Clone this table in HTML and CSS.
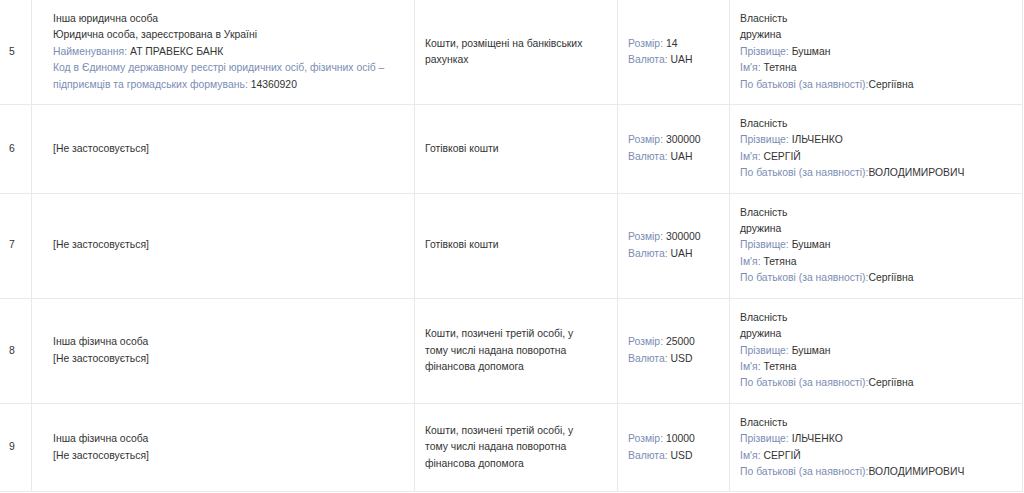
FILE: index.html
```html
<!DOCTYPE html>
<html lang="uk">
<head>
<meta charset="utf-8">
<link rel="stylesheet" href="styles.css">
</head>
<body>
<table class="assets">
  <colgroup>
    <col class="c-num"><col class="c-owner"><col class="c-type"><col class="c-size"><col class="c-rights">
  </colgroup>
  <tbody>
    <tr>
      <td class="num">5</td>
      <td class="owner">
        <div>Інша юридична особа</div>
        <div>Юридична особа, зареєстрована в Україні</div>
        <div><span class="lbl">Найменування:</span> АТ ПРАВЕКС БАНК</div>
        <div><span class="lbl">Код в Єдиному державному реєстрі юридичних осіб, фізичних осіб – підприємців та громадських формувань:</span> 14360920</div>
      </td>
      <td class="type">Кошти, розміщені на банківських рахунках</td>
      <td>
        <div><span class="lbl">Розмір:</span> 14</div>
        <div><span class="lbl">Валюта:</span> UAH</div>
      </td>
      <td>
        <div>Власність</div>
        <div>дружина</div>
        <div><span class="lbl">Прізвище:</span> Бушман</div>
        <div><span class="lbl">Ім'я:</span> Тетяна</div>
        <div><span class="lbl">По батькові (за наявності):</span>Сергіївна</div>
      </td>
    </tr>
    <tr>
      <td class="num">6</td>
      <td class="owner"><div>[Не застосовується]</div></td>
      <td class="type">Готівкові кошти</td>
      <td>
        <div><span class="lbl">Розмір:</span> 300000</div>
        <div><span class="lbl">Валюта:</span> UAH</div>
      </td>
      <td>
        <div>Власність</div>
        <div><span class="lbl">Прізвище:</span> ІЛЬЧЕНКО</div>
        <div><span class="lbl">Ім'я:</span> СЕРГІЙ</div>
        <div><span class="lbl">По батькові (за наявності):</span>ВОЛОДИМИРОВИЧ</div>
      </td>
    </tr>
    <tr>
      <td class="num">7</td>
      <td class="owner"><div>[Не застосовується]</div></td>
      <td class="type">Готівкові кошти</td>
      <td>
        <div><span class="lbl">Розмір:</span> 300000</div>
        <div><span class="lbl">Валюта:</span> UAH</div>
      </td>
      <td>
        <div>Власність</div>
        <div>дружина</div>
        <div><span class="lbl">Прізвище:</span> Бушман</div>
        <div><span class="lbl">Ім'я:</span> Тетяна</div>
        <div><span class="lbl">По батькові (за наявності):</span>Сергіївна</div>
      </td>
    </tr>
    <tr>
      <td class="num">8</td>
      <td class="owner">
        <div>Інша фізична особа</div>
        <div>[Не застосовується]</div>
      </td>
      <td class="type">Кошти, позичені третій особі, у тому числі надана поворотна фінансова допомога</td>
      <td>
        <div><span class="lbl">Розмір:</span> 25000</div>
        <div><span class="lbl">Валюта:</span> USD</div>
      </td>
      <td>
        <div>Власність</div>
        <div>дружина</div>
        <div><span class="lbl">Прізвище:</span> Бушман</div>
        <div><span class="lbl">Ім'я:</span> Тетяна</div>
        <div><span class="lbl">По батькові (за наявності):</span>Сергіївна</div>
      </td>
    </tr>
    <tr>
      <td class="num">9</td>
      <td class="owner">
        <div>Інша фізична особа</div>
        <div>[Не застосовується]</div>
      </td>
      <td class="type">Кошти, позичені третій особі, у тому числі надана поворотна фінансова допомога</td>
      <td>
        <div><span class="lbl">Розмір:</span> 10000</div>
        <div><span class="lbl">Валюта:</span> USD</div>
      </td>
      <td>
        <div>Власність</div>
        <div><span class="lbl">Прізвище:</span> ІЛЬЧЕНКО</div>
        <div><span class="lbl">Ім'я:</span> СЕРГІЙ</div>
        <div><span class="lbl">По батькові (за наявності):</span>ВОЛОДИМИРОВИЧ</div>
      </td>
    </tr>
  </tbody>
</table>
</body>
</html>
```

FILE: styles.css
```css
html, body {
  margin: 0;
  padding: 0;
  background: #ffffff;
}

body {
  font-family: "Liberation Sans", Arial, sans-serif;
  font-size: 10.4px;
  line-height: 16.4px;
  color: #333333;
}

.assets {
  table-layout: fixed;
  border-collapse: separate;
  border-spacing: 0;
  width: 1023px;
}

.c-num { width: 32px; }
.c-owner { width: 383px; }
.c-type { width: 203px; }
.c-size { width: 112px; }
.c-rights { width: 293px; }

.assets td {
  box-sizing: border-box;
  vertical-align: middle;
  padding: 11px 10px;
  border-right: 1px solid #e6e9ee;
  border-bottom: 1px solid #e6e9ee;
}

.assets td.num {
  padding-left: 9px;
  padding-right: 4px;
}

.assets td.owner {
  padding-left: 21px;
}

.assets td.type {
  padding-right: 30px;
}

.lbl {
  color: #7b8db3;
}
```
